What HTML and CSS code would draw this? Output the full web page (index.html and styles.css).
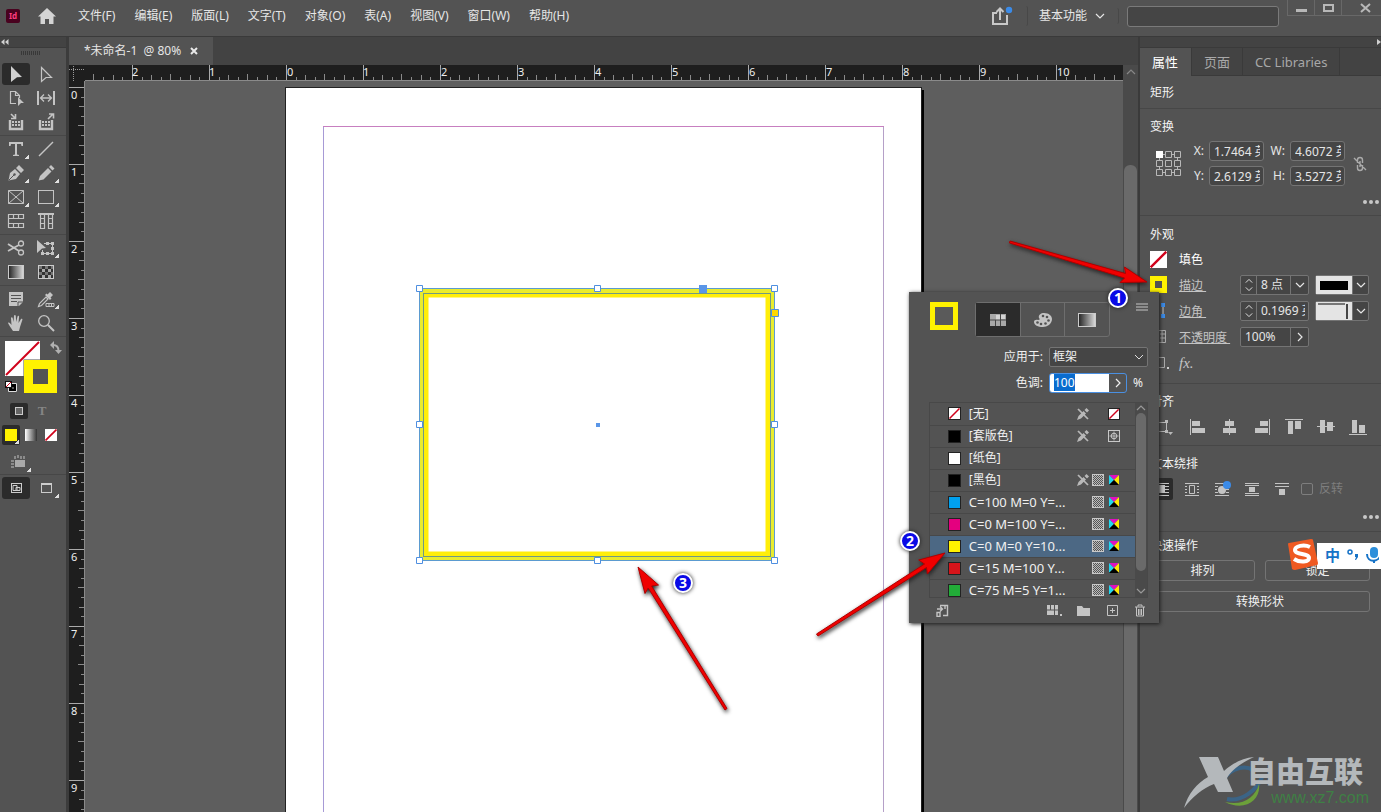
FILE: index.html
```html
<!DOCTYPE html>
<html lang="zh-CN">
<head>
<meta charset="utf-8">
<title>未命名-1 @ 80%</title>
<link rel="stylesheet" href="styles.css">
</head>
<body>
<svg class="defs" aria-hidden="true">
  <defs>
    <linearGradient id="fade"><stop offset="0" stop-color="#222"/><stop offset="1" stop-color="#ddd"/></linearGradient>
    <linearGradient id="fade-rev"><stop offset="0" stop-color="#fff"/><stop offset="1" stop-color="#333"/></linearGradient>
    <pattern id="dots" width="2" height="2" patternUnits="userSpaceOnUse"><rect width="2" height="2" fill="#bbb"/><rect width="1" height="1" fill="#555"/><rect x="1" y="1" width="1" height="1" fill="#555"/></pattern>
    <symbol id="i-none" viewBox="0 0 12 12"><rect width="12" height="12" fill="#fff"/><path d="M.5 11.500L11.500.5" stroke="#d0021b" stroke-width="1.700"/></symbol>
    <symbol id="i-pencil-off" viewBox="0 0 12 12"><path d="M0 12l1.500-4 5-5L9 5.500l-5 5zM7.500 2L9.500 0 12 2.500l-2 2z" fill="#b8b8b8"/><path d="M1 1l10 10" stroke="#b8b8b8" stroke-width="1.700"/></symbol>
    <symbol id="i-tint" viewBox="0 0 12 12"><rect x=".5" y=".5" width="11" height="11" fill="url(#dots)" stroke="#c8c8c8"/></symbol>
    <symbol id="i-cmyk" viewBox="0 0 12 12"><path d="M1 1h10L6 6z" fill="#e010c0"/><path d="M1 1v10l5-5z" fill="#20d8f0"/><path d="M11 1v10L6 6z" fill="#ffe800"/><path d="M1 11h10L6 6z" fill="#000"/></symbol>
    <symbol id="i-reg" viewBox="0 0 12 12"><g fill="none" stroke="#c8c8c8"><rect x=".5" y=".5" width="11" height="11"/><circle cx="6" cy="6" r="2.800"/><path d="M6 1.500v9M1.500 6h9" stroke-width=".8"/></g></symbol>
    <symbol id="i-down" viewBox="0 0 10 10"><path d="M1 3l4 4 4-4" fill="none" stroke="currentColor" stroke-width="1.200"/></symbol>
    <symbol id="i-up" viewBox="0 0 10 10"><path d="M1 7l4-4 4 4" fill="none" stroke="currentColor" stroke-width="1.200"/></symbol>
    <symbol id="i-right" viewBox="0 0 10 10"><path d="M3 1l4 4-4 4" fill="none" stroke="currentColor" stroke-width="1.200"/></symbol>
  </defs>
</svg>

<div class="app">
  <header class="menubar">
    <svg class="logo" width="14" height="14" viewBox="0 0 14 14" role="img" aria-label="InDesign"><rect width="14" height="14" rx="2" fill="#49021f"/><text x="7" y="10" text-anchor="middle" class="logo-text">Id</text></svg>
    <button class="plain home" aria-label="主页"><svg width="18" height="16" viewBox="0 0 18 16"><path d="M9 0L0 8.500h2.500V16H7v-5h4v5h4.500V8.500H18z" fill="#d4d4d4"/></svg></button>
    <nav class="menus">
      <button class="plain">文件(F)</button><button class="plain">编辑(E)</button><button class="plain">版面(L)</button><button class="plain">文字(T)</button><button class="plain">对象(O)</button><button class="plain">表(A)</button><button class="plain">视图(V)</button><button class="plain">窗口(W)</button><button class="plain">帮助(H)</button>
    </nav>
    <button class="plain share" aria-label="共享"><svg width="22" height="20" viewBox="0 0 22 20"><g fill="none" stroke="#c8c8c8" stroke-width="2"><path d="M6 7H2v11h14V9"/><path d="M9 14V3"/><path d="M5.500 6L9 2.500 12.500 6"/></g><circle cx="18" cy="4" r="3.200" fill="#3b8be8"/></svg></button>
    <button class="plain workspace">基本功能<svg width="10" height="10"><use href="#i-down"/></svg></button>
    <input class="search" type="text" aria-label="搜索">
    <div class="window-buttons">
      <button aria-label="最小化"><svg width="11" height="10"><rect y="6" width="11" height="3" fill="#b8b8b8"/></svg></button>
      <button aria-label="最大化"><svg width="11" height="10"><rect x="1" y="2" width="9" height="6" fill="none" stroke="#b8b8b8" stroke-width="2"/></svg></button>
      <button class="wide" aria-label="关闭"><svg width="11" height="10"><path d="M1 1l9 8M10 1L1 9" stroke="#b8b8b8" stroke-width="2"/></svg></button>
    </div>
  </header>

  <div class="work">
    <aside class="toolbox">
      <div class="strip"><svg width="8" height="6" viewBox="0 0 8 6"><path d="M3.500 0v6L0 3zM7.500 0v6L4 3z" fill="#d0d0d0"/></svg></div>
      <div class="grip"></div>
      <div class="tools">
        <button class="on" aria-label="选择"><svg viewBox="0 0 18 18"><path d="M4 1l11 11-5 .3L4 17z" fill="#d0d0d0"/></svg></button>
        <button aria-label="直接选择"><svg viewBox="0 0 18 18"><path d="M4.500 2.500l10 10H9l-4.500 4z" fill="none" stroke="#c4c4c4" stroke-width="1.200"/></svg></button>
        <button aria-label="页面"><svg viewBox="0 0 18 18"><path d="M9 14.500H3.500v-12h5l4 4V9M8.500 2.500v4h4" fill="none" stroke="#c4c4c4" stroke-width="1.200"/><path d="M11 8l6 6h-3l-3 3z" fill="#c4c4c4"/></svg></button>
        <button aria-label="间隙"><svg viewBox="0 0 18 18"><path d="M1 2v14M17 2v14" stroke="#c4c4c4" stroke-width="2"/><path d="M4 9h10M7 5.500L3.500 9 7 12.500M11 5.500L14.500 9 11 12.500" fill="none" stroke="#c4c4c4" stroke-width="1.300"/></svg></button>
        <button aria-label="内容收集器"><svg viewBox="0 0 18 18"><path d="M3 7v9h12V7" fill="none" stroke="#c4c4c4" stroke-width="2.400"/><path d="M5 9h8M5 12h8" stroke="#c4c4c4" stroke-width="2" stroke-dasharray="2 1"/><path d="M4 1l4 4M8.500 1v4.500H4" fill="none" stroke="#c4c4c4" stroke-width="1.600"/></svg></button>
        <button aria-label="内容置入器"><svg viewBox="0 0 18 18"><path d="M3 7v9h12V7" fill="none" stroke="#c4c4c4" stroke-width="2.400"/><path d="M5 9h8M5 12h8" stroke="#c4c4c4" stroke-width="2" stroke-dasharray="2 1"/><path d="M11 6l5-5M12 1h4.500v4.500" fill="none" stroke="#c4c4c4" stroke-width="1.600"/></svg></button>
      </div>
      <div class="tools">
        <button class="more" aria-label="文字"><svg viewBox="0 0 18 18"><path d="M2 2h14v4h-1.500L14 4h-4v10.500l2 .5v1H6v-1l2-.5V4H4l-.5 2H2z" fill="#c4c4c4"/></svg></button>
        <button aria-label="直线"><svg viewBox="0 0 18 18"><path d="M2 16L16 2" stroke="#c4c4c4" stroke-width="1.500"/></svg></button>
        <button class="more" aria-label="钢笔"><svg viewBox="0 0 18 18"><path d="M1.500 16.500L3 9l5-4 5 5-4 5zM9 4l3-3 5 5-3 3z" fill="#c4c4c4"/><path d="M2 16l5-5" stroke="#535353"/><circle cx="7.500" cy="10.500" r="1.200" fill="#535353"/></svg></button>
        <button class="more" aria-label="铅笔"><svg viewBox="0 0 18 18"><path d="M1.500 16.500L3 12l8-8 3.500 3.500-8 8zM12 3l2-2 3.500 3.500-2 2z" fill="#c4c4c4"/></svg></button>
        <button class="more" aria-label="矩形框架"><svg viewBox="0 0 18 18"><path d="M1.500 2.500h15v13h-15zL16.500 15.500M16.500 2.500L1.500 15.500" fill="none" stroke="#c4c4c4"/></svg></button>
        <button class="more" aria-label="矩形"><svg viewBox="0 0 18 18"><rect x="1.500" y="2.500" width="15" height="13" fill="none" stroke="#c4c4c4"/></svg></button>
        <button aria-label="水平网格"><svg viewBox="0 0 18 18"><path d="M1 2.500h16M1 6.500h16M1 11.500h16M1 15.500h16M1.500 2v14M6.500 3v4M11.500 3v4M16.500 2v5M6.500 11v4M11.500 11v4M16.500 11v5" stroke="#c4c4c4" stroke-width="1.200"/></svg></button>
        <button aria-label="垂直网格"><svg viewBox="0 0 18 18"><path d="M1 2h16" stroke="#c4c4c4" stroke-width="2"/><path d="M3.500 2v15M7.500 2v15M11.500 2v15M15.500 2v15M3 6.500h5M3 11.500h5M3 16.500h5M11 6.500h5M11 11.500h5M11 16.500h5" stroke="#c4c4c4" stroke-width="1.200"/></svg></button>
      </div>
      <div class="tools">
        <button aria-label="剪刀"><svg viewBox="0 0 18 18"><path d="M1 5l11 7M1 12l11-6" stroke="#c4c4c4" stroke-width="1.800"/><g fill="none" stroke="#c4c4c4" stroke-width="1.300"><circle cx="14" cy="4.500" r="2.500"/><circle cx="14" cy="13.500" r="2.500"/></g></svg></button>
        <button class="more" aria-label="自由变换"><svg viewBox="0 0 18 18"><path d="M7 4.500h8.500v10h-10V11" fill="none" stroke="#c4c4c4"/><path d="M0 1l9 8-4 .5L0 14z" fill="#c4c4c4"/><path d="M4 13h3v3H4zM14 13h3v3h-3zM14 3h3v3h-3zM9 3h3v3H9zM9 13h3v3H9zM14 8h3v3h-3z" fill="#c4c4c4"/></svg></button>
        <button aria-label="渐变色板"><svg viewBox="0 0 18 18"><rect x="1.500" y="2.500" width="15" height="13" fill="url(#fade)" stroke="#ccc"/></svg></button>
        <button aria-label="渐变羽化"><svg viewBox="0 0 18 18"><rect x="1.500" y="2.500" width="15" height="13" fill="#333" stroke="#ccc"/><path d="M2 4.500h14M2 10.500h14" stroke="#777" stroke-width="3" stroke-dasharray="3 3"/><path d="M5 7.500h11M5 13.500h11" stroke="#aaa" stroke-width="3" stroke-dasharray="3 3"/></svg></button>
      </div>
      <div class="tools">
        <button aria-label="附注"><svg viewBox="0 0 18 18"><path d="M2 2h14v10l-4 4H2z" fill="#c4c4c4"/><path d="M4 5.500h10M4 8.500h10M4 11.500h6M11 16v-4h5" stroke="#535353" fill="none"/></svg></button>
        <button class="more" aria-label="吸管"><svg viewBox="0 0 18 18"><path d="M1.500 16.500l1-3L9 7l2 2-6.500 6.500z" fill="none" stroke="#c4c4c4" stroke-width="1.200"/><path d="M8 5l5 5 1.500-1.500-1-1L16 5l-3-3-2.500 2.500-1-1z" fill="#c4c4c4"/><path d="M9 13.500h8v3H9zM12 13v4M14.500 13v4" fill="none" stroke="#c4c4c4"/></svg></button>
        <button aria-label="抓手"><svg viewBox="0 0 18 18"><path d="M6 17C4 14 2 11 1 9c1-1 2 0 3.500 2L4 4c0-1 1.500-1 1.700 0L6.500 8l.5-6c0-1.200 1.700-1.200 1.800 0L9.200 8l1.300-5.500c.3-1 1.700-.8 1.600.3L11.500 9l2.500-4c.6-.8 1.700-.2 1.400.8L13 13l-1 4z" fill="#c4c4c4"/></svg></button>
        <button aria-label="缩放"><svg viewBox="0 0 18 18"><circle cx="7" cy="7" r="5.300" fill="none" stroke="#c4c4c4" stroke-width="1.300"/><path d="M11 11l6 6" stroke="#c4c4c4" stroke-width="2"/></svg></button>
      </div>
      <svg class="fill-stroke" width="62" height="62" viewBox="0 0 62 62"><rect x="3" y="4" width="35" height="35" fill="#fff"/><path d="M4 38L37 5" stroke="#d0021b" stroke-width="2"/><rect x="21.500" y="22.500" width="35" height="34" fill="#535353"/><path fill="#fff200" fill-rule="evenodd" d="M22 23h33v33H22zM31 32v15h15V32z"/><path d="M51 8q5.500 0 5.500 6" fill="none" stroke="#b0b0b0" stroke-width="2"/><path d="M52 4v8l-4-4zM53 13h7l-3.500 4z" fill="#b0b0b0"/><path d="M8.500 48.500h5v5h-5z" fill="none" stroke="#000" stroke-width="3"/><path d="M6.500 46.500h8v8h-8z" fill="none" stroke="#ddd"/><rect x="3.500" y="44.500" width="6" height="6" fill="#fff" stroke="#111"/><path d="M4 50l5-5" stroke="#d0021b"/></svg>
      <div class="modes">
        <button class="on" aria-label="格式针对容器"><svg width="10" height="10"><rect x="1.500" y="1.500" width="7" height="7" fill="#666" stroke="#ccc"/></svg></button>
        <button class="letter" aria-label="格式针对文本">T</button>
      </div>
      <div class="paints">
        <button class="on more" aria-label="应用颜色"><svg width="12" height="12"><rect width="12" height="12" fill="#fff200"/></svg></button>
        <button aria-label="应用渐变"><svg width="12" height="12"><rect width="12" height="12" fill="url(#fade-rev)"/></svg></button>
        <button aria-label="应用无"><svg width="12" height="12"><use href="#i-none"/></svg></button>
      </div>
      <div class="tools single"><button class="more" aria-label="视图选项"><svg viewBox="0 0 18 18"><rect x="6" y="7" width="10" height="7" fill="#aaa"/><path d="M6 3v3M9 2v3M12 3v3M15 3v3M2 8h3M2 11h3M2 14h3" stroke="#c4c4c4"/></svg></button></div>
      <div class="tools last">
        <button class="on" aria-label="正常"><svg viewBox="0 0 18 18"><rect x="4.500" y="4.500" width="10" height="9" fill="none" stroke="#ccc"/><path d="M6 6.500h4v5H6zM9 8.500h4v3H9z" fill="none" stroke="#ccc"/></svg></button>
        <button class="more" aria-label="预览"><svg viewBox="0 0 18 18"><rect x="4.500" y="4.500" width="10" height="9" fill="none" stroke="#ccc"/><path d="M4 5h11" stroke="#ccc" stroke-width="2"/></svg></button>
      </div>
    </aside>

    <main class="document">
      <div class="doc-tabs"><div class="doc-tab"><span>*未命名-1&nbsp; @ 80%</span><button class="plain" aria-label="关闭文档"><svg width="8" height="8"><path d="M1 1l6 6M7 1L1 7" stroke="#e8e8e8" stroke-width="2"/></svg></button></div></div>
      <div class="canvas">
        <svg class="corner" width="16" height="16"><path d="M4.500 1v15M0 4.500h15" stroke="#999" stroke-dasharray="1 1"/></svg>
        <svg class="ruler-h">
          <defs><pattern id="ticks-h" x="201" width="77" height="15" patternUnits="userSpaceOnUse"><path d="M.5 0v15" stroke="#aaa"/><path d="M10.500 12v3M19.500 10v5M29.500 12v3M38.500 9v6M48.500 12v3M58.500 10v5M67.500 12v3" stroke="#8a8a8a"/></pattern></defs>
          <rect width="100%" height="15" fill="url(#ticks-h)"/>
          <text x="47" y="11">2</text><text x="124" y="11">1</text><text x="202" y="11">0</text><text x="278" y="11">1</text><text x="356" y="11">2</text><text x="433" y="11">3</text><text x="510" y="11">4</text><text x="587" y="11">5</text><text x="664" y="11">6</text><text x="741" y="11">7</text><text x="818" y="11">8</text><text x="895" y="11">9</text><text x="972" y="11">10</text>
        </svg>
        <svg class="ruler-v">
          <defs><pattern id="ticks-v" y="6" width="15" height="77" patternUnits="userSpaceOnUse"><path d="M0 .5h15" stroke="#aaa"/><path d="M12 10.500h3M10 19.500h5M12 29.500h3M9 38.500h6M12 48.500h3M10 58.500h5M12 67.500h3" stroke="#8a8a8a"/></pattern></defs>
          <rect width="15" height="100%" fill="url(#ticks-v)"/>
          <text x="2" y="18">0</text><text x="2" y="95">1</text><text x="2" y="172">2</text><text x="2" y="249">3</text><text x="2" y="326">4</text><text x="2" y="403">5</text><text x="2" y="480">6</text><text x="2" y="557">7</text><text x="2" y="634">8</text><text x="2" y="711">9</text>
        </svg>
        <div class="pasteboard">
          <svg class="artwork"><g transform="translate(-85 -81)">
            <rect x="289" y="90" width="635" height="2000" fill="#000"/>
            <rect x="285.500" y="87.500" width="636" height="2000" fill="#fff" stroke="#222"/>
            <path d="M323.500 2000V126.500" stroke="#a79ad6" fill="none"/><path d="M883.500 2000V126.500" stroke="#b5a0c8" fill="none"/><path d="M323 126.500h561" stroke="#c77fc0"/>
            <rect x="421.500" y="290.500" width="351" height="268" fill="none" stroke="#e9ec2e" stroke-width="5"/>
            <rect x="426" y="295" width="342" height="259" fill="none" stroke="#ffee0a" stroke-width="5"/>
            <rect x="423.500" y="293.500" width="347" height="263" fill="none" stroke="#6f9a86"/>
            <rect x="419.500" y="288.500" width="355" height="272" fill="none" stroke="#5b9bd0"/>
            <g fill="#fff" stroke="#4f8fe0"><path d="M416.500 285.500h6v6h-6zM594.500 285.500h6v6h-6zM771.500 285.500h6v6h-6zM416.500 421.500h6v6h-6zM771.500 421.500h6v6h-6zM416.500 557.500h6v6h-6zM594.500 557.500h6v6h-6zM771.500 557.500h6v6h-6z"/><path d="M771.500 309.500h7v7h-7z" fill="#ffd800"/></g>
            <path d="M699 285h8v8h-8zM596 423h4v4h-4z" fill="#5a96e8"/>
          </g></svg>
          <svg class="note-arrow arrow-three" width="100" height="155"><path class="shaft" d="M3 2L23.500 20 16.600 21 92 143.500 90 145 13.200 23 10 28.500z"/></svg>
          <span class="badge badge-three">3</span>
        </div>
        <div class="scrollbar"><svg width="10" height="10"><use href="#i-up"/></svg><div class="thumb"></div></div>
      </div>
    </main>

    <aside class="panel">
      <div class="strip right"><svg width="4" height="6"><path d="M0 0v6l4-3z" fill="#d0d0d0"/></svg></div>
      <div class="panel-tabs" role="tablist"><button class="active" role="tab">属性</button><button role="tab">页面</button><button role="tab">CC Libraries</button></div>
      <section class="kind"><h2>矩形</h2></section>
      <section class="geometry">
        <h2>变换</h2>
        <div class="transform">
          <svg width="26" height="26" viewBox="0 0 26 26"><g fill="none" stroke="#b8b8b8"><path d="M3.500 3.500h18v18h-18z"/><g fill="#535353"><path d="M9.500.5h6v6h-6zM18.500.5h6v6h-6zM.5 9.500h6v6h-6zM9.500 9.500h6v6h-6zM18.500 9.500h6v6h-6zM.5 18.500h6v6h-6zM9.500 18.500h6v6h-6zM18.500 18.500h6v6h-6z"/></g></g><rect width="7" height="7" fill="#fff"/></svg>
          <div class="coords">
            <label for="x">X:</label><input id="x" type="text" value="1.7464 英寸"><label for="w">W:</label><input id="w" type="text" value="4.6072 英寸">
            <label for="y">Y:</label><input id="y" type="text" value="2.6129 英寸"><label for="h">H:</label><input id="h" type="text" value="3.5272 英寸">
          </div>
          <button class="plain" aria-label="约束宽高比例"><svg width="14" height="16" viewBox="0 0 14 16"><g fill="none" stroke="#aaa" stroke-width="1.400"><path d="M4.500 7V4a2.500 2.500 0 0 1 5 0v3M4.500 9v3a2.500 2.500 0 0 0 5 0V9M7 5v6M1 2l12 12"/></g></svg></button>
        </div>
        <button class="plain dots" aria-label="更多选项"><i></i><i></i><i></i></button>
      </section>
      <section class="look">
        <h2>外观</h2>
        <div class="line"><button class="plain" aria-label="填色"><svg width="17" height="17"><use href="#i-none"/></svg></button><span class="name wide-name">填色</span></div>
        <div class="line"><button class="plain" aria-label="描边色"><svg width="18" height="18"><path fill="#fff200" fill-rule="evenodd" d="M0 0h17v17H0zM5 5v7h7V5z"/></svg></button><a class="name" href="#stroke">描边&nbsp;</a>
          <div class="field"><span class="step"><svg width="10" height="8"><use href="#i-up"/></svg><svg width="10" height="8"><use href="#i-down"/></svg></span><input id="stroke" type="text" value="8 点" aria-label="描边粗细"><button aria-label="粗细列表"><svg width="10" height="10"><use href="#i-down"/></svg></button></div>
          <div class="field style"><svg class="sample" width="36" height="18"><rect x="4" y="5" width="28" height="9" fill="#000"/></svg><button aria-label="描边类型"><svg width="10" height="10"><use href="#i-down"/></svg></button></div></div>
        <div class="line"><svg class="lead" width="18" height="18"><path d="M13 5v7" stroke="#ccc"/><path d="M3 1h4v4H3zM11 1h4v4h-4zM3 12h4v4H3zM11 12h4v4h-4z" fill="#3b8be8"/></svg><a class="name" href="#corner">边角&nbsp;</a>
          <div class="field"><span class="step"><svg width="10" height="8"><use href="#i-up"/></svg><svg width="10" height="8"><use href="#i-down"/></svg></span><input id="corner" class="long" type="text" value="0.1969 英寸" aria-label="边角大小"></div>
          <div class="field style"><svg class="sample" width="36" height="18"><path d="M2 2h27" stroke="#777" stroke-width="2"/><path d="M31 2v15" stroke="#111" stroke-width="1.500"/></svg><button aria-label="边角形状"><svg width="10" height="10"><use href="#i-down"/></svg></button></div></div>
        <div class="line"><svg class="lead" width="18" height="18"><path d="M1.500 2.500h14v12h-14zM10 6h5M10 10h5M12 3v12" fill="none" stroke="#aaa"/></svg><a class="name" href="#opacity">不透明度&nbsp;</a>
          <div class="field"><input id="opacity" class="pct" type="text" value="100%" aria-label="不透明度"><button aria-label="不透明度滑块"><svg width="10" height="10"><use href="#i-right"/></svg></button></div></div>
        <div class="line"><svg class="lead" width="20" height="18"><path d="M2.500 3.500h12v10h-12z" fill="none" stroke="#aaa"/><path d="M17 13h2v2h-2z" fill="#ccc"/></svg><button class="plain fx">fx.</button></div>
      </section>
      <section>
        <h2>对齐</h2>
        <div class="icons align">
          <button aria-label="对齐选区"><svg viewBox="0 0 22 18"><rect x="3.500" y="4.500" width="12" height="9" fill="none" stroke="#b8b8b8"/><path d="M14 2h3v3h-3zM14 12h3v3h-3z" fill="#b8b8b8"/><path d="M17 14h5l-2.500 3z" fill="#b8b8b8"/></svg></button>
          <button aria-label="左对齐"><svg viewBox="0 0 18 18"><path d="M1 1h1v16H1zM3 3h8v5H3zM3 10h13v5H3z" fill="#c4c4c4"/></svg></button>
          <button aria-label="水平居中对齐"><svg viewBox="0 0 18 18"><path d="M8 1h1v16H8zM4 3h9v5H4zM2 10h13v5H2z" fill="#c4c4c4"/></svg></button>
          <button aria-label="右对齐"><svg viewBox="0 0 18 18"><path d="M16 1h1v16h-1zM7 3h8v5H7zM2 10h13v5H2z" fill="#c4c4c4"/></svg></button>
          <button aria-label="顶对齐"><svg viewBox="0 0 18 18"><path d="M0 1h18v1H0zM3 3h5v13H3zM10 3h6v8h-6z" fill="#c4c4c4"/></svg></button>
          <button aria-label="垂直居中对齐"><svg viewBox="0 0 18 18"><path d="M0 8h18v1H0zM3 2h5v13H3zM10 4h6v9h-6z" fill="#c4c4c4"/></svg></button>
          <button aria-label="底对齐"><svg viewBox="0 0 18 18"><path d="M0 16h18v1H0zM3 2h5v13H3zM10 7h6v8h-6z" fill="#c4c4c4"/></svg></button>
        </div>
      </section>
      <section>
        <h2>文本绕排</h2>
        <div class="icons wrap">
          <button class="on" aria-label="无文本绕排"><svg viewBox="0 0 18 18"><path d="M2 3.500h14M2 6.500h14M2 9.500h14M2 12.500h14M2 15.500h14" stroke="#c4c4c4"/><path d="M6 5h6v8H6z" fill="#c4c4c4"/></svg></button>
          <button aria-label="沿定界框绕排"><svg viewBox="0 0 18 18"><path d="M2 3.500h14M2 15.500h14M2 6.500h2M2 9.500h2M2 12.500h2M14 6.500h2M14 9.500h2M14 12.500h2M6.500 5.500h5v8h-5z" fill="none" stroke="#c4c4c4"/></svg></button>
          <button aria-label="沿对象形状绕排"><svg viewBox="0 0 18 18"><path d="M2 3.500h12M2 15.500h14M2 6.500h3M2 9.500h2M2 12.500h3M13 9.500h3M13 12.500h3" stroke="#c4c4c4"/><circle cx="9" cy="10" r="4" fill="#c4c4c4"/><circle cx="14" cy="5" r="4" fill="#3b8be8"/></svg></button>
          <button aria-label="上下型绕排"><svg viewBox="0 0 18 18"><path d="M2 3.500h14M2 5.500h14M2 13.500h14M2 15.500h14" stroke="#c4c4c4"/><path d="M6 7h6v5H6z" fill="#c4c4c4"/></svg></button>
          <button aria-label="下型绕排"><svg viewBox="0 0 18 18"><path d="M2 3.500h14M2 6.500h14" stroke="#c4c4c4"/><path d="M6 9h6v6H6z" fill="#c4c4c4"/></svg></button>
          <label class="check"><input type="checkbox" disabled>反转</label>
        </div>
        <button class="plain dots" aria-label="更多选项"><i></i><i></i><i></i></button>
      </section>
      <section class="quick">
        <h2>快速操作</h2>
        <div class="quick-grid"><button>排列</button><button>锁定</button><button class="full">转换形状</button></div>
      </section>
      <div class="watermark">
        <svg width="90" height="56" viewBox="0 0 90 56"><path d="M38 34c4-16 22-22 32-16M44 47c14 3 30-8 36-24" fill="none" stroke="#3b6486" stroke-width="4"/><path d="M42 50c18 4 30-4 34-18 2 16-14 28-34 18z" fill="#6ca03a"/><path d="M16 5h19l6 14C50 11 60 6 71 5 56 12 48 19 44 26l6 14H35l-4-8C20 36 9 45 1 56 5 42 14 31 25 25z" fill="#b4b8bb"/></svg>
        <strong>自由互联</strong><em>www.xz7.com</em>
      </div>
    </aside>
  </div>
</div>

<div class="popup" role="dialog" aria-label="色板">
  <div class="popup-top">
    <svg width="28" height="28"><rect x="2.500" y="2.500" width="23" height="23" fill="#5a5a5a" stroke="#fff200" stroke-width="5"/></svg>
    <div class="segments">
      <button class="on" aria-label="色板"><svg width="18" height="14"><rect x="1" y="1" width="16" height="12" fill="#a8a8a8"/><path d="M7 2h4v5H7zM12 2h4v4h-4z" fill="#d4d4d4"/><path d="M1 7h16M6.500 7v6M11.500 1v12" stroke="#444"/></svg></button>
      <button aria-label="颜色"><svg width="20" height="16" viewBox="0 0 20 16"><path fill="#c4c4c4" d="M11 1c5 0 8 3 8 6 0 5-5 8-9 8-5 0-9-2-9-5 0-2 2-2.500 4-2 2 0 2-1 1-2-1-3 2-5 5-5z"/><g fill="#535353"><circle cx="10" cy="4" r="1.300"/><circle cx="14" cy="5" r="1.300"/><circle cx="15.500" cy="8.500" r="1.300"/><circle cx="12.500" cy="11.500" r="1.300"/><circle cx="8" cy="12" r="1.300"/><circle cx="4.500" cy="10.500" r="1.300"/></g></svg></button>
      <button aria-label="渐变"><svg width="18" height="14"><rect x=".5" y=".5" width="17" height="13" fill="url(#fade)" stroke="#ccc"/></svg></button>
    </div>
    <button class="plain burger" aria-label="面板菜单"><i></i><i></i><i></i></button>
  </div>
  <div class="form">
    <label for="apply">应用于:</label><select id="apply"><option>框架</option></select>
    <label for="tint">色调:</label><div class="tint"><output id="tint" tabindex="0"><mark>100</mark></output><button aria-label="色调滑块"><svg width="10" height="10"><use href="#i-right"/></svg></button></div><span class="percent">%</span>
  </div>
  <div class="list">
    <table>
      <tr class="cjk"><td class="chip"><svg class="sw"><use href="#i-none"/></svg></td><td>[无]</td><td><svg><use href="#i-pencil-off"/></svg></td><td></td><td><svg class="sw small"><use href="#i-none"/></svg></td></tr>
      <tr class="cjk"><td class="chip"><span class="sw black"></span></td><td>[套版色]</td><td><svg><use href="#i-pencil-off"/></svg></td><td></td><td><svg><use href="#i-reg"/></svg></td></tr>
      <tr class="cjk"><td class="chip"><span class="sw paper"></span></td><td>[纸色]</td><td></td><td></td><td></td></tr>
      <tr class="cjk"><td class="chip"><span class="sw black"></span></td><td>[黑色]</td><td><svg><use href="#i-pencil-off"/></svg></td><td><svg><use href="#i-tint"/></svg></td><td><svg><use href="#i-cmyk"/></svg></td></tr>
      <tr><td class="chip"><span class="sw cyan"></span></td><td>C=100 M=0 Y=...</td><td></td><td><svg><use href="#i-tint"/></svg></td><td><svg><use href="#i-cmyk"/></svg></td></tr>
      <tr><td class="chip"><span class="sw magenta"></span></td><td>C=0 M=100 Y=...</td><td></td><td><svg><use href="#i-tint"/></svg></td><td><svg><use href="#i-cmyk"/></svg></td></tr>
      <tr class="selected"><td class="chip"><span class="sw yellow"></span></td><td>C=0 M=0 Y=10...</td><td></td><td><svg><use href="#i-tint"/></svg></td><td><svg><use href="#i-cmyk"/></svg></td></tr>
      <tr><td class="chip"><span class="sw red"></span></td><td>C=15 M=100 Y...</td><td></td><td><svg><use href="#i-tint"/></svg></td><td><svg><use href="#i-cmyk"/></svg></td></tr>
      <tr><td class="chip"><span class="sw green"></span></td><td>C=75 M=5 Y=1...</td><td></td><td><svg><use href="#i-tint"/></svg></td><td><svg><use href="#i-cmyk"/></svg></td></tr>
    </table>
    <div class="list-scroll"><svg width="10" height="10"><use href="#i-up"/></svg><div class="thumb"></div><svg width="10" height="10"><use href="#i-down"/></svg></div>
  </div>
  <div class="popup-foot">
    <button class="plain lib" aria-label="添加到 CC 库"><svg width="13" height="13"><path d="M4 1.500h7.500v10H7M1 5h5M4 2.500L6.500 5 4 7.500M1 8.500h3v4H1zM9 1v4" fill="none" stroke="#c4c4c4" stroke-width="1.400"/></svg></button>
    <button class="plain" aria-label="视图"><svg width="16" height="13"><rect x="1" y="1" width="11" height="10" fill="#c4c4c4"/><path d="M1 6h11M4.500 1v5M8.500 1v10" stroke="#535353"/><path d="M14 10h2v2h-2z" fill="#c4c4c4"/></svg></button>
    <button class="plain" aria-label="新建颜色组"><svg width="14" height="13"><path d="M0 2h5l1.500 2H13v8H0z" fill="#c4c4c4"/></svg></button>
    <button class="plain" aria-label="新建色板"><svg width="13" height="13"><path d="M1.500 1.500h10v10h-10zM6.500 4v5M4 6.500h5" fill="none" stroke="#c4c4c4"/></svg></button>
    <button class="plain" aria-label="删除色板"><svg width="12" height="13"><path d="M1 3h10M4 2.500V1h4v1.500M2.500 3v9h7V3M4.500 5v6M6 5v6M7.500 5v6" fill="none" stroke="#c4c4c4"/></svg></button>
  </div>
</div>

<svg class="note-arrow arrow-one" width="150" height="60"><path class="shaft" d="M5 5L120.500 37.500 119.500 31 142 46 115 46.500 119.500 42 4.500 7z"/></svg>
<svg class="note-arrow arrow-two" width="140" height="96"><path class="shaft" d="M131 6L113.400 27 112.500 20.500 4 89 2.500 87 110.500 17 104.700 13z"/></svg>
<span class="badge badge-one">1</span>
<span class="badge badge-two">2</span>
<div class="ime">
  <svg width="31" height="32" viewBox="0 0 31 32"><path d="M1 5q0-1 1-1L24 0q2 0 2 1l5 23q0 2-1 2L8 31q-2 0-3-1z" fill="#ef5a22"/><path d="M23 8c-6-3-15-1-15 3 0 5 14 3 14 8 0 4-9 5-15 1" fill="none" stroke="#fff" stroke-width="4"/></svg>
  <span>中</span><span class="punct"><svg width="12" height="12"><circle cx="3" cy="3" r="2" fill="none" stroke="#1673c7" stroke-width="1.500"/><path d="M8 5h3v3l-2 3H8l1-3H8z" fill="#1673c7"/></svg></span>
  <svg width="13" height="16"><rect x="4" width="8" height="11" rx="4" fill="#2d8fdb"/><path d="M1 7c0 9 12 9 14 0M8 13v3" fill="none" stroke="#1673c7" stroke-width="2"/></svg>
</div>
</body>
</html>
```

FILE: styles.css
```css
* { box-sizing: border-box; }
body { margin: 0; overflow: hidden; background: #535353; color: #e6e6e6; font: 12px/16px "Noto Sans", "Noto Sans CJK SC", sans-serif; }
svg { display: block; flex: none; }
button, input, select { font: inherit; color: inherit; margin: 0; }
button { display: flex; align-items: center; justify-content: center; padding: 0; border: 0; border-radius: 2px; background: none; }
h2 { margin: 0; font-size: 12px; line-height: 16px; font-weight: 400; color: #f2f2f2; }
.defs { position: absolute; width: 0; height: 0; }
.app { display: flex; flex-direction: column; height: 100vh; }

.menubar { display: flex; align-items: center; height: 36px; flex: none; padding: 0 0 4px 6px; }
.logo-text { font: 700 8px "Noto Sans", sans-serif; fill: #ff3d7f; }
.home { margin: 0 22px 0 18px; }
.menus { display: flex; gap: 19px; flex: 1; }
.share { padding-right: 14px; border-right: 1px solid #484848; }
.workspace { gap: 8px; padding: 0 13px 0 11px; margin-right: 8px; border-right: 1px solid #484848; }
.search { width: 152px; height: 21px; border: 1px solid #7a7a7a; border-radius: 3px; background: #454545; }
.window-buttons { display: flex; align-self: flex-start; margin-left: 8px; border: solid #686868; border-width: 0 0 1px 1px; }
.window-buttons button { width: 27px; height: 15px; border-right: 1px solid #686868; border-radius: 0; }
.window-buttons .wide { width: 39px; padding-left: 8px; border: 0; }

.work { display: flex; flex: 1; min-height: 0; border-top: 1px solid #3a3a3a; }
.strip { display: flex; align-items: center; height: 11px; padding-left: 1px; background: #434343; border-bottom: 1px solid #3a3a3a; }
.strip.right { justify-content: flex-end; }
.toolbox { width: 69px; flex: none; border-right: 3px solid #3c3c3c; }
.grip { width: 19px; height: 4px; margin: 3px 0 6px 21px; background: repeating-linear-gradient(90deg, #383838 0 1px, transparent 1px 2px); }
.tools { display: grid; grid-template-columns: 28px 28px; gap: 2px; padding: 2px 0 2px 2px; border-bottom: 1px solid #474747; }
.tools button { position: relative; height: 22px; border-radius: 3px; }
.tools svg { width: 18px; height: 18px; }
.on { background: #2b2b2b; }
.more { position: relative; }
.more::after { content: ""; position: absolute; right: 1px; bottom: 1px; width: 4px; height: 4px; background: linear-gradient(135deg, transparent 50%, #e0e0e0 50%); }
.fill-stroke { margin-left: 2px; }
.modes { display: flex; gap: 6px; padding: 4px 0 0 10px; }
.modes button { width: 18px; height: 16px; }
.modes .letter { width: 16px; font: 700 13px "Liberation Serif", serif; color: #858585; }
.paints { display: flex; gap: 2px; padding: 6px 0 0 2px; }
.paints button { width: 18px; height: 20px; }
.tools.single { padding: 6px 0 1px 4px; }
.tools.last { border: 0; }

.document { display: flex; flex-direction: column; flex: 1; min-width: 0; border-right: 2px solid #3a3a3a; }
.doc-tabs { display: flex; height: 28px; flex: none; background: #434343; }
.doc-tab { display: flex; align-items: center; gap: 9px; padding: 0 15px; background: #535353; }
.canvas { display: grid; grid-template: 16px minmax(0, 1fr) / 16px minmax(0, 1fr) 15px; flex: 1; min-height: 0; }
.corner { background: #1e1e1e; }
.ruler-h { width: 100%; height: 16px; background: #1e1e1e; border-bottom: 1px solid #8a8a8a; }
.ruler-v { grid-row: 2; grid-column: 1; width: 16px; height: 100%; background: #1e1e1e; border-right: 1px solid #8a8a8a; }
.ruler-h text, .ruler-v text { font-size: 11px; fill: #eee; }
.pasteboard { position: relative; grid-row: 2; grid-column: 2; overflow: hidden; background: #5e5e5e; }
.artwork { width: 100%; height: 100%; }
.scrollbar { grid-row: 1 / 3; grid-column: 3; display: flex; flex-direction: column; align-items: center; padding-top: 2px; background: #4a4a4a; color: #888; }
.scrollbar .thumb { flex: 1; width: 13px; margin-top: 88px; border-radius: 6px 6px 0 0; background: #6a6a6a; }

.panel { position: relative; display: flex; flex-direction: column; width: 241px; flex: none; }
.panel > * { flex: none; }
.panel-tabs { display: flex; height: 28px; background: #434343; border-bottom: 1px solid #3a3a3a; }
.panel-tabs button { padding: 0 12px; border-right: 1px solid #3a3a3a; border-radius: 0; color: #a8a8a8; font-size: 13px; }
.panel-tabs .active { height: 28px; padding: 0 13px 0 12px; background: #535353; color: #fff; }
section { padding: 10px 11px 7px 10px; border-bottom: 1px solid #474747; }
.kind { padding-top: 9px; }
.geometry { padding-bottom: 6px; }
.transform { display: flex; align-items: center; margin: 6px 0 9px; padding-left: 6px; }
.coords { display: grid; grid-template-columns: 16px 55px 16px 55px; gap: 5px; align-items: center; margin: 0 8px 0 6px; text-align: right; }
.coords input { width: 55px; height: 20px; padding: 0 3px 0 4px; border: 1px solid #747474; border-radius: 3px; background: #454545; }
.dots { gap: 2px; height: 14px; margin: 0 -9px 0 auto; }
.dots i { width: 4px; height: 4px; border-radius: 2px; background: #c8c8c8; }
.look { padding-top: 11px; padding-bottom: 10px; }
.line { display: flex; align-items: center; height: 20px; margin-top: 6px; }
.name { width: 61px; margin-left: 11px; padding-top: 2px; color: #c4c4c4; }
.wide-name { margin-left: 12px; color: #fff; }
.field { display: flex; width: 69px; height: 20px; margin-right: 6px; border: 1px solid #747474; border-radius: 2px; background: #454545; }
.field input { flex: 1; width: 20px; min-width: 0; padding: 0 0 0 4px; border: 0; background: none; }
.field .long { padding-right: 3px; }
.field button { width: 18px; border-left: 1px solid #747474; border-radius: 0; }
.field.style { width: 54px; margin: 0; }
.step { display: flex; flex-direction: column; justify-content: center; align-items: center; width: 16px; border-right: 1px solid #747474; }
.sample { background: #e4e4e4; }
.fx { margin-left: 9px; font: italic 15px "Liberation Serif", serif; color: #c4c4c4; }
.icons { display: flex; height: 22px; margin-top: 6px; }
.icons button { width: 22px; height: 22px; }
.icons svg { width: 18px; height: 18px; }
.align { gap: 10px; padding-left: 1px; }
.align button:first-child { width: 26px; justify-content: flex-start; }
.align button:first-child svg { width: 22px; }
.wrap { gap: 8px; margin-bottom: 10px; padding-left: 1px; }
.check { display: flex; align-items: center; gap: 6px; color: #7e7e7e; }
.check input { appearance: none; width: 12px; height: 12px; border: 1px solid #7e7e7e; border-radius: 2px; }
.quick { padding-top: 6px; border: 0; }
.quick-grid { display: grid; grid-template-columns: 1fr 1fr; gap: 10px; margin-top: 6px; }
.quick-grid button { height: 21px; border: 1px solid #747474; border-radius: 3px; color: #f0f0f0; }
.quick-grid .full { grid-column: 1 / 3; }
.watermark { position: absolute; right: 12px; bottom: 0; width: 186px; height: 60px; }
.watermark svg { position: absolute; left: 0; bottom: 4px; }
.watermark strong { position: absolute; right: 6px; bottom: 25px; font-size: 29px; line-height: 30px; font-weight: 900; color: #b4b8bb; white-space: nowrap; }
.watermark em { position: absolute; right: 0; bottom: 6px; font: 16px/16px "Liberation Sans", sans-serif; color: #3f8045; }

.popup { position: absolute; top: 292px; right: 222px; width: 250px; padding: 10px 11px 0 20px; background: #535353; box-shadow: 1px 1px 4px #1c1c1c; }
.popup-top { display: flex; align-items: flex-start; padding-left: 1px; }
.segments { display: flex; width: 137px; height: 35px; margin-left: 17px; border: 1px solid #6e6e6e; border-radius: 3px; }
.segments button { flex: 1; border-radius: 0; }
.segments button + button { border-left: 1px solid #6e6e6e; }
.burger { flex-direction: column; gap: 1px; margin: 1px 0 0 26px; }
.burger i { width: 12px; height: 2px; background: #8c8c8c; }
.form { display: grid; grid-template-columns: 114px 78px 15px; gap: 6px; margin: 10px 0 9px; align-items: center; color: #f0f0f0; }
.form label { text-align: right; }
.form select { grid-column: 2 / 4; height: 20px; padding: 0 3px; appearance: none; border: 1px solid #747474; border-radius: 2px; background: #454545 url("data:image/svg+xml,%3Csvg xmlns='http://www.w3.org/2000/svg' width='10' height='10'%3E%3Cpath d='M1 3l4 4 4-4' fill='none' stroke='%23ddd'/%3E%3C/svg%3E") no-repeat right 3px center; }
.tint { display: flex; height: 20px; border: 1px solid #4a90e2; border-radius: 3px; overflow: hidden; }
.tint output { flex: 1; padding: 1px 4px; background: #fff; }
.tint mark { background: #0a6cce; color: #fff; }
.tint button { width: 17px; }
.list { display: flex; height: 196px; overflow: hidden; border: 1px solid #484848; }
table { flex: 1; table-layout: fixed; border-collapse: collapse; height: 198px; align-self: flex-start; font-size: 13px; }
tr { height: 22px; border-bottom: 1px solid #484848; }
td { padding: 0; height: 22px; width: 16px; white-space: nowrap; color: #f0f0f0; }
td:nth-child(2) { width: 108px; }
td:last-child { width: 27px; }
.chip { width: 39px; padding-left: 18px; }
.cjk { font-size: 12px; }
.selected { background: #4c6884; }
td svg { width: 12px; height: 12px; }
.sw { display: block; width: 13px; height: 13px; border: 1px solid #222; }
.small { width: 12px; height: 12px; }
.black { background: #000; }
.paper { background: #fff; }
.cyan { background: #00a0ee; }
.magenta { background: #e4007f; }
.yellow { background: #fff200; }
.red { background: #d7141a; }
.green { background: #22ac38; }
.list-scroll { display: flex; flex-direction: column; align-items: center; width: 12px; background: #4a4a4a; color: #999; }
.list-scroll .thumb { width: 10px; height: 158px; margin-bottom: 15px; border-radius: 5px; background: #6a6a6a; }
.popup-foot { display: flex; align-items: center; gap: 15px; height: 25px; padding: 0 2px 0 7px; }
.lib { margin-right: auto; }

.plain { flex: none; }
.note-arrow { position: absolute; pointer-events: none; filter: drop-shadow(1px 2px 2px #222); }
.shaft { fill: #f00000; stroke: #b00000; stroke-width: 1px; }
.arrow-one { top: 236px; right: 226px; }
.arrow-two { top: 547px; right: 427px; }
.arrow-three { left: 550px; top: 484px; }
.badge { position: absolute; width: 20px; height: 20px; border: 2px solid #fff; border-radius: 10px; background: #0a0ae6; color: #fff; font: 700 14px/16px "Noto Sans", sans-serif; text-align: center; box-shadow: 0 0 4px #222; }
.badge-one { top: 288px; right: 253px; }
.badge-two { top: 531px; right: 461px; }
.badge-three { top: 492px; left: 588px; }
.ime { position: absolute; top: 539px; right: 0; display: flex; align-items: center; width: 94px; height: 31px; overflow: hidden; background: linear-gradient(#fff, #fff) 30px 4px / 64px 26px no-repeat; color: #1673c7; font-weight: 700; font-size: 15px; gap: 7px; }
```
